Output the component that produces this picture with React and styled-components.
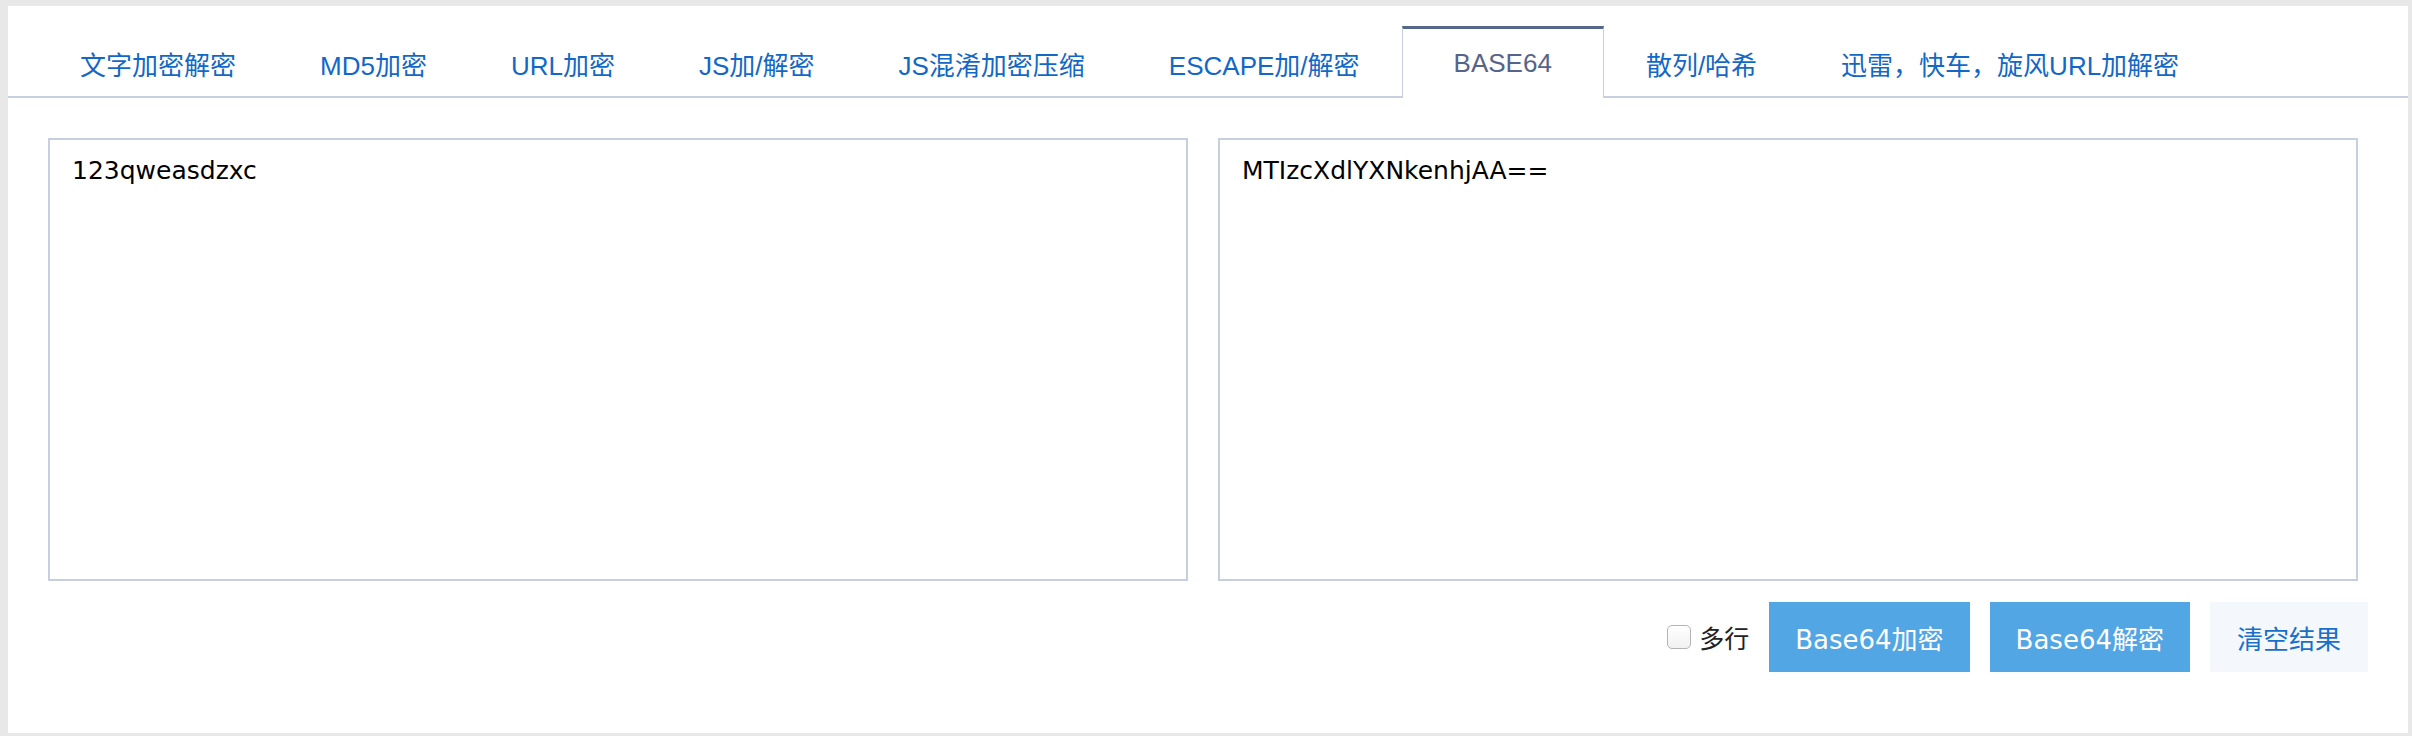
import React from "react";
import styled, { createGlobalStyle } from "styled-components";

const GlobalStyle = createGlobalStyle`
  html, body {
    margin: 0;
    padding: 0;
    background: #e8e8e8;
  }
  * {
    box-sizing: border-box;
  }
`;

const Panel = styled.div`
  margin: 6px 4px 0 8px;
  height: 727px;
  background: #fff;
  display: flex;
  flex-direction: column;
`;

const TabBar = styled.ul`
  display: flex;
  margin: 0;
  padding: 20px 0 0 30px;
  list-style: none;
  border-bottom: 2px solid #c8d0e0;
`;

const Tab = styled.li`
  height: 72px;
  margin-bottom: -2px;
  display: flex;
  align-items: center;
  padding: ${(p) => (p.$active ? "0 51px" : "0 42px")};
  border-top: 3px solid ${(p) => (p.$active ? "#56688a" : "transparent")};
  border-left: ${(p) => (p.$active ? "1px solid #c8d0e0" : "none")};
  border-right: ${(p) => (p.$active ? "1px solid #c8d0e0" : "none")};
  background: ${(p) => (p.$active ? "#fff" : "transparent")};
  color: ${(p) => (p.$active ? "#56648a" : "#1268c6")};
  font-family: "Liberation Sans", "Noto Sans CJK SC", sans-serif;
  font-size: 26px;
  white-space: nowrap;
  cursor: pointer;
`;

const Content = styled.div`
  padding: 40px 50px 0 40px;
`;

const Editors = styled.div`
  display: grid;
  grid-template-columns: 1fr 1fr;
  gap: 30px;
`;

const TextBox = styled.textarea`
  display: block;
  width: 100%;
  height: 443px;
  margin: 0;
  padding: 13px 22px;
  border: 2px solid #c6cfe0;
  border-radius: 0;
  outline: none;
  resize: none;
  color: #000;
  font-family: "DejaVu Sans", "Noto Sans CJK SC", sans-serif;
  font-size: 25px;
  line-height: 35px;
`;

const Actions = styled.div`
  display: flex;
  justify-content: flex-end;
  align-items: center;
  gap: 20px;
  margin: 21px -10px 0 0;
`;

const CheckLabel = styled.label`
  display: flex;
  align-items: center;
  gap: 8px;
  color: #222;
  font-family: "Noto Sans CJK SC", sans-serif;
  font-size: 25px;
`;

const Check = styled.input`
  appearance: none;
  width: 24px;
  height: 24px;
  margin: 0;
  border: 1.5px solid #b4b4b4;
  border-radius: 5px;
  background: linear-gradient(#fff, #f1f1f1);
`;

const Button = styled.button`
  height: 70px;
  padding: 0 ${(p) => (p.$light ? "27px" : "26px")};
  border: none;
  border-radius: 0;
  background: ${(p) => (p.$light ? "#f4f8fc" : "#52a6e4")};
  color: ${(p) => (p.$light ? "#1a6fc9" : "#fff")};
  font-family: "DejaVu Sans", "Noto Sans CJK SC", sans-serif;
  font-size: 26px;
  cursor: pointer;
`;

const tabs = [
  "文字加密解密",
  "MD5加密",
  "URL加密",
  "JS加/解密",
  "JS混淆加密压缩",
  "ESCAPE加/解密",
  "BASE64",
  "散列/哈希",
  "迅雷，快车，旋风URL加解密",
];

export default function App() {
  return (
    <>
      <GlobalStyle />
      <Panel>
        <TabBar>
          {tabs.map((t) => (
            <Tab key={t} $active={t === "BASE64"}>
              {t}
            </Tab>
          ))}
        </TabBar>
        <Content>
          <Editors>
            <TextBox defaultValue="123qweasdzxc" />
            <TextBox defaultValue="MTIzcXdlYXNkenhjAA==" />
          </Editors>
          <Actions>
            <CheckLabel>
              <Check type="checkbox" />
              多行
            </CheckLabel>
            <Button>Base64加密</Button>
            <Button>Base64解密</Button>
            <Button $light>清空结果</Button>
          </Actions>
        </Content>
      </Panel>
    </>
  );
}
